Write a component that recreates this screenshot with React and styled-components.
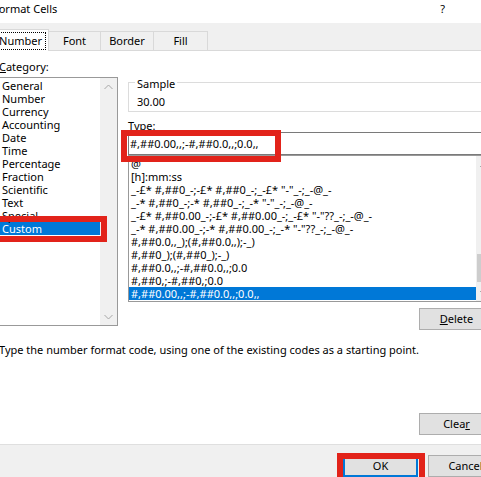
import React from "react";
import styled, { createGlobalStyle } from "styled-components";

const GlobalStyle = createGlobalStyle`
  html, body {
    margin: 0;
    padding: 0;
    background: #fff;
  }
  body {
    font-family: "Noto Sans", "Segoe UI", sans-serif;
    font-size: 11px;
    color: #000;
  }
`;

const Page = styled.div`
  position: relative;
  width: 481px;
  height: 477px;
  overflow: hidden;
  background: #fff;
`;

const Dialog = styled.div`
  width: 520px;
  height: 477px;
  margin-left: -10px;
  display: flex;
  flex-direction: column;
`;

const TitleBar = styled.div`
  height: 23px;
  box-sizing: border-box;
  padding: 1px 65px 0 3px;
  display: flex;
  justify-content: space-between;
  align-items: flex-start;
  line-height: 15px;
`;

const TabStrip = styled.div`
  height: 29px;
  box-sizing: border-box;
  padding-left: 2px;
  background: #f0f0f0;
  border-bottom: 1px solid #d9d9d9;
  display: flex;
  align-items: flex-end;
`;

const Tab = styled.div`
  width: ${p => p.$w}px;
  height: ${p => (p.$active ? 22 : 19)}px;
  margin-bottom: ${p => (p.$active ? -1 : 0)}px;
  margin-right: -1px;
  box-sizing: border-box;
  border: 1px solid #d9d9d9;
  border-bottom: none;
  background: ${p => (p.$active ? "#fff" : "#f0f0f0")};
  display: flex;
  align-items: center;
  justify-content: center;
  line-height: 16px;
  position: relative;
  z-index: ${p => (p.$active ? 1 : 0)};
`;

const FocusRing = styled.span`
  border: 1px dotted #000;
  padding: 0 3px;
  line-height: 16px;
`;

const Body = styled.div`
  height: 397px;
  box-sizing: border-box;
  padding: 8px 16px 9px 9px;
  background: #fff;
  display: flex;
  flex-direction: column;
`;

const Columns = styled.div`
  display: flex;
  gap: 10px;
`;

const LeftCol = styled.div`
  width: 119px;
  display: flex;
  flex-direction: column;
`;

const RightCol = styled.div`
  flex: 1;
  min-width: 0;
  display: flex;
  flex-direction: column;
`;

const Label = styled.div`
  line-height: ${p => p.$lh || 16}px;
  margin-top: ${p => p.$mt || 0}px;
  margin-bottom: ${p => p.$mb || 0}px;
  white-space: nowrap;
`;

const ListBox = styled.div`
  height: ${p => p.$h}px;
  box-sizing: border-box;
  border: 1px solid #999;
  display: flex;
  background: #fff;
`;

const Rows = styled.div`
  flex: 1;
  min-width: 0;
  padding-top: 1px;
  overflow: hidden;
`;

const Row = styled.div`
  height: 13px;
  line-height: 13px;
  padding-left: 2px;
  white-space: nowrap;
  background: ${p => (p.$selected ? "#0078d7" : "transparent")};
  color: ${p => (p.$selected ? "#fff" : "#000")};
`;

const ScrollBar = styled.div`
  width: 17px;
  flex-shrink: 0;
  background: #f0f0f0;
  display: flex;
  flex-direction: column;
`;

const ScrollButton = styled.div`
  height: 17px;
  display: flex;
  align-items: center;
  justify-content: center;
`;

const ScrollTrack = styled.div`
  flex: 1;
  display: flex;
  flex-direction: column;
`;

const Thumb = styled.div`
  height: 28px;
  margin: auto 1px 2px;
  background: #cdcdcd;
`;

const Group = styled.fieldset`
  margin: 14px 0 0;
  padding: 3px 8px 1px;
  min-width: 0;
  border: 1px solid #dcdcdc;
`;

const Legend = styled.legend`
  padding: 4px 2px 0;
  margin-left: -2px;
  line-height: 14px;
`;

const SampleValue = styled.div`
  line-height: 16px;
`;

const TextInput = styled.div`
  height: 23px;
  box-sizing: border-box;
  border: 1px solid #7a7a7a;
  padding-left: 1px;
  display: flex;
  align-items: center;
  white-space: nowrap;
`;

const ButtonRow = styled.div`
  display: flex;
  justify-content: flex-end;
  gap: 10px;
  margin-top: ${p => (p.$auto ? "auto" : `${p.$mt || 0}px`)};
`;

const Button = styled.div`
  width: 75px;
  height: 22px;
  box-sizing: border-box;
  border: ${p => (p.$default ? "2px solid #0078d7" : "1px solid #adadad")};
  background: #e1e1e1;
  display: flex;
  align-items: center;
  justify-content: center;
  line-height: 16px;
`;

const HelpText = styled.div`
  margin-top: 12px;
  line-height: 16px;
  white-space: nowrap;
`;

const Footer = styled.div`
  flex: 1;
  border-top: 1px solid #dfdfdf;
  background: #f0f0f0;
  padding: 10px 7px 0 0;
`;

const Annotation = styled.div`
  position: absolute;
  left: ${p => p.$x}px;
  top: ${p => p.$y}px;
  width: ${p => p.$w}px;
  height: ${p => p.$h}px;
  box-sizing: border-box;
  border: 6px solid #e2231a;
  pointer-events: none;
`;

const Chevron = ({ up, color }) => (
  <svg width="9" height="6" viewBox="0 0 9 6">
    <path
      d={up ? "M0.5 5 L4.5 1 L8.5 5" : "M0.5 1 L4.5 5 L8.5 1"}
      fill="none"
      stroke={color}
      strokeWidth="1"
    />
  </svg>
);

const categories = [
  "General", "Number", "Currency", "Accounting", "Date", "Time",
  "Percentage", "Fraction", "Scientific", "Text", "Special", "Custom",
];

const formats = [
  "@",
  "[h]:mm:ss",
  '_-£* #,##0_-;-£* #,##0_-;_-£* "-"_-;_-@_-',
  '_-* #,##0_-;-* #,##0_-;_-* "-"_-;_-@_-',
  '_-£* #,##0.00_-;-£* #,##0.00_-;_-£* "-"??_-;_-@_-',
  '_-* #,##0.00_-;-* #,##0.00_-;_-* "-"??_-;_-@_-',
  "#,##0.0,,_);(#,##0.0,,);-_)",
  "#,##0_);(#,##0_);-_)",
  "#,##0.0,,;-#,##0.0,,;0.0",
  "#,##0,;-#,##0,;0.0",
  "#,##0.00,,;-#,##0.0,,;0.0,,",
];

const tabs = [
  { name: "Number", w: 57 },
  { name: "Font", w: 53 },
  { name: "Border", w: 54 },
  { name: "Fill", w: 55 },
];

export default function App() {
  return (
    <Page>
      <GlobalStyle />
      <Dialog>
        <TitleBar>
          <span>Format Cells</span>
          <span>?</span>
        </TitleBar>
        <TabStrip>
          {tabs.map((t, i) => (
            <Tab key={t.name} $w={t.w} $active={i === 0}>
              {i === 0 ? <FocusRing>{t.name}</FocusRing> : t.name}
            </Tab>
          ))}
        </TabStrip>
        <Body>
          <Columns>
            <LeftCol>
              <Label $mb={2}>
                <u>C</u>ategory:
              </Label>
              <ListBox $h={249}>
                <Rows>
                  {categories.map(c => (
                    <Row key={c} $selected={c === "Custom"}>{c}</Row>
                  ))}
                </Rows>
                <ScrollBar>
                  <ScrollButton><Chevron up color="#a6a6a6" /></ScrollButton>
                  <ScrollTrack />
                  <ScrollButton><Chevron color="#a6a6a6" /></ScrollButton>
                </ScrollBar>
              </ListBox>
            </LeftCol>
            <RightCol>
              <Group>
                <Legend>Sample</Legend>
                <SampleValue>30.00</SampleValue>
              </Group>
              <Label $lh={13} $mt={7}>
                <u>T</u>ype:
              </Label>
              <TextInput>#,##0.00,,;-#,##0.0,,;0.0,,</TextInput>
              <ListBox $h={147}>
                <Rows>
                  {formats.map((f, i) => (
                    <Row key={f} $selected={i === formats.length - 1}>{f}</Row>
                  ))}
                </Rows>
                <ScrollBar>
                  <ScrollButton><Chevron up color="#606060" /></ScrollButton>
                  <ScrollTrack>
                    <Thumb />
                  </ScrollTrack>
                  <ScrollButton><Chevron color="#606060" /></ScrollButton>
                </ScrollBar>
              </ListBox>
              <ButtonRow $mt={6}>
                <Button><u>D</u>elete</Button>
              </ButtonRow>
            </RightCol>
          </Columns>
          <HelpText>
            Type the number format code, using one of the existing codes as a starting point.
          </HelpText>
          <ButtonRow $auto>
            <Button>Clea<u>r</u></Button>
          </ButtonRow>
        </Body>
        <Footer>
          <ButtonRow>
            <Button $default>OK</Button>
            <Button>Cancel</Button>
          </ButtonRow>
        </Footer>
      </Dialog>
      <Annotation $x={-6} $y={216} $w={113} $h={26} />
      <Annotation $x={121} $y={130} $w={160} $h={32} />
      <Annotation $x={337} $y={453} $w={88} $h={40} />
    </Page>
  );
}
